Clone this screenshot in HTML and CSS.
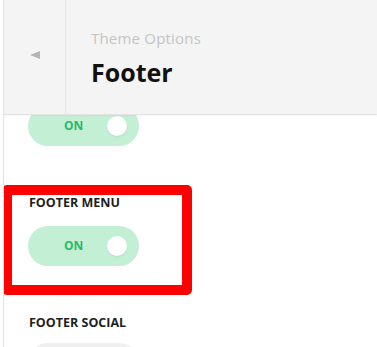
FILE: index.html
```html
<!DOCTYPE html>
<html>
<head>
<meta charset="utf-8">
<link rel="stylesheet" href="styles.css">
</head>
<body>
<div class="panel">
  <header class="header">
    <div class="back"><span class="arrow"></span></div>
    <div class="titles">
      <div class="crumb">Theme Options</div>
      <div class="title">Footer</div>
    </div>
  </header>
  <div class="content">
    <section class="field">
      <div class="label"></div>
      <div class="toggle on"><span class="state">ON</span><span class="knob"></span></div>
    </section>
    <section class="field highlight">
      <div class="label">FOOTER MENU</div>
      <div class="toggle on"><span class="state">ON</span><span class="knob"></span></div>
    </section>
    <section class="field">
      <div class="label">FOOTER SOCIAL</div>
      <div class="toggle off"><span class="knob"></span></div>
    </section>
  </div>
</div>
</body>
</html>
```
FILE: styles.css
```css
html, body {
  margin: 0;
  padding: 0;
  background: #fff;
  overflow: hidden;
}
body {
  font-family: "Open Sans", "Noto Sans", sans-serif;
  color: #222;
  width: 377px;
  height: 347px;
}
.panel {
  margin-left: 3px;
  border-left: 1px solid #e4e4e4;
  height: 347px;
  overflow: hidden;
}
.header {
  position: relative;
  z-index: 2;
  display: flex;
  height: 114px;
  background: #f4f4f4;
  border-bottom: 1px solid #e2e2e2;
  box-shadow: 0 1px 2px rgba(0,0,0,0.04);
}
.back {
  width: 62px;
  border-right: 1px solid #e6e6e6;
  display: flex;
  align-items: center;
  justify-content: center;
  padding-bottom: 5px;
  box-sizing: border-box;
}
.arrow {
  width: 0;
  height: 0;
  border-top: 4px solid transparent;
  border-bottom: 4px solid transparent;
  border-right: 10px solid #b4b4b4;
}
.titles {
  padding-left: 25px;
  padding-top: 28px;
}
.crumb {
  font-size: 15px;
  line-height: 20px;
  color: #c4c4c4;
  letter-spacing: 0.2px;
}
.title {
  font-size: 25px;
  line-height: 30px;
  font-weight: 700;
  color: #111;
  margin-top: 9px;
}
.content {
  margin-top: -50px;
  margin-left: -2px;
}
.field {
  width: 190px;
  box-sizing: border-box;
  border: 10px solid transparent;
  border-radius: 5px;
  padding: 0 0 19px 17px;
  margin-top: 10px;
}
.field:first-child {
  margin-top: 0;
}
.field.highlight {
  border-color: #ff0000;
}
.label {
  font-size: 12.5px;
  line-height: 16px;
  height: 16px;
  font-weight: 700;
  color: #1e1e1e;
  white-space: nowrap;
}
.toggle {
  margin-top: 15px;
  margin-left: -1px;
  width: 111px;
  height: 40px;
  border-radius: 20px;
  display: flex;
  align-items: center;
  padding-left: 36px;
  padding-right: 12px;
  box-sizing: border-box;
}
.toggle.on {
  background: #c3efd5;
}
.toggle.off {
  background: #efefef;
  margin-top: 12px;
}
.state {
  font-size: 12px;
  font-weight: 700;
  color: #2cb866;
  line-height: 16px;
}
.knob {
  margin-left: auto;
  width: 20px;
  height: 20px;
  border-radius: 50%;
  background: #fff;
  box-shadow: 0 1px 2px rgba(0,0,0,0.08);
}
```
